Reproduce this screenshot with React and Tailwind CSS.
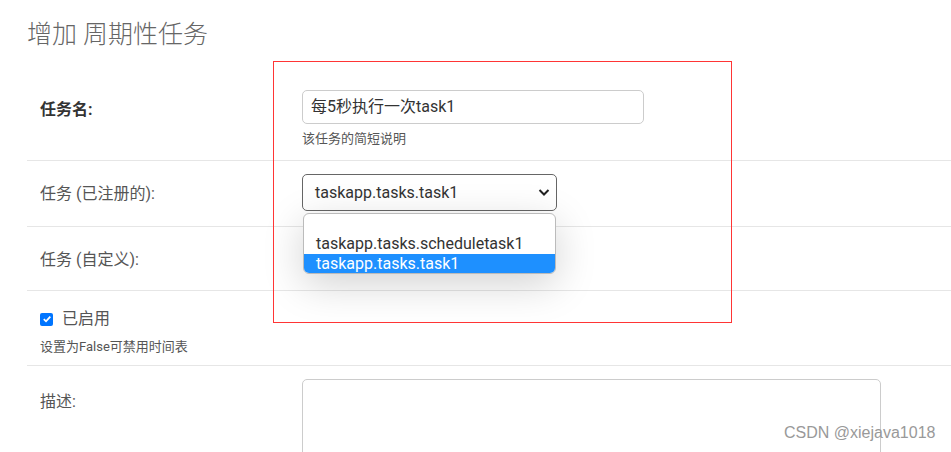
import React from "react";

const font = { fontFamily: 'Roboto, "Noto Sans CJK SC", sans-serif' };

export default function App() {
  return (
    <div className="relative w-[951px] h-[452px] overflow-hidden bg-white" style={font}>
      <div className="pl-[27px]">
        <h1 className="h-[75px] pt-[16px] text-[25px] leading-[38px] font-light text-[#666]">增加 周期性任务</h1>

        {/* Row 1 */}
        <div className="flex h-[86px] border-b border-[#e6e6e6]">
          <div className="w-[275px] pl-[13px] pt-[24px] text-[16px] leading-[22px] font-bold text-[#333]">任务名:</div>
          <div className="pt-[15px]">
            <div className="w-[342px] h-[34px] border border-[#ccc] rounded-[5px] flex items-center pl-[8px] text-[16px] text-[#333]">
              每5秒执行一次task1
            </div>
            <div className="mt-[6px] text-[13px] leading-[17px] text-[#555]">该任务的简短说明</div>
          </div>
        </div>

        {/* Row 2 */}
        <div className="flex h-[66px] border-b border-[#e6e6e6]">
          <div className="w-[275px] pl-[13px] pt-[22px] text-[16px] leading-[22px] text-[#555]">任务 (已注册的):</div>
          <div className="pt-[13px]">
            <div className="relative w-[255px] h-[37px] border border-[#666] rounded-[5px] flex items-center pl-[12px] text-[16px] text-[#333]">
              taskapp.tasks.task1
              <svg className="absolute right-[6px] top-[13px]" width="12" height="9" viewBox="0 0 12 9">
                <path d="M1.5 2 L6 6.5 L10.5 2" fill="none" stroke="#222" strokeWidth="2" />
              </svg>
            </div>
          </div>
        </div>

        {/* Row 3 */}
        <div className="flex h-[64px] border-b border-[#e6e6e6]">
          <div className="w-[275px] pl-[13px] pt-[22px] text-[16px] leading-[22px] text-[#555]">任务 (自定义):</div>
        </div>

        {/* Row 4 */}
        <div className="h-[75px] border-b border-[#e6e6e6] pl-[13px] pt-[17px]">
          <div className="flex items-center gap-[9px]">
            <div className="w-[13px] h-[13px] rounded-[2px] bg-[#0075ff] flex items-center justify-center">
              <svg width="10" height="10" viewBox="0 0 10 10">
                <path d="M1.8 5.2 L4 7.3 L8.3 2.6" fill="none" stroke="#fff" strokeWidth="1.8" />
              </svg>
            </div>
            <span className="text-[16px] leading-[22px] text-[#555]">已启用</span>
          </div>
          <div className="mt-[8px] text-[13px] leading-[17px] text-[#555]">设置为False可禁用时间表</div>
        </div>

        {/* Row 5 */}
        <div className="flex h-[100px]">
          <div className="w-[275px] pl-[13px] pt-[25px] text-[16px] leading-[22px] text-[#555]">描述:</div>
          <div className="pt-[13px]">
            <div className="w-[579px] h-[100px] border border-[#ccc] rounded-[5px]" />
          </div>
        </div>
      </div>

      {/* Dropdown */}
      <div className="absolute left-[303px] top-[213px] w-[253px] h-[61px] rounded-[6px] border border-[#bbb] bg-white overflow-hidden shadow-[0_10px_40px_rgba(0,0,0,0.18)] text-[16px] leading-[20px]">
        <div className="h-[20px]" />
        <div className="h-[20px] pl-[12px] text-[#333]">taskapp.tasks.scheduletask1</div>
        <div className="h-[20px] pl-[12px] bg-[#1e90ff] text-white">taskapp.tasks.task1</div>
      </div>

      {/* Red highlight box */}
      <div className="absolute left-[273px] top-[61px] w-[459px] h-[262px] border border-[#ff3535]" />

      {/* Watermark */}
      <div className="absolute left-[784px] top-[423px] text-[16px] leading-[20px] text-[#999]" style={{ fontFamily: '"Liberation Sans", Arial, sans-serif' }}>
        CSDN @xiejava1018
      </div>
    </div>
  );
}
